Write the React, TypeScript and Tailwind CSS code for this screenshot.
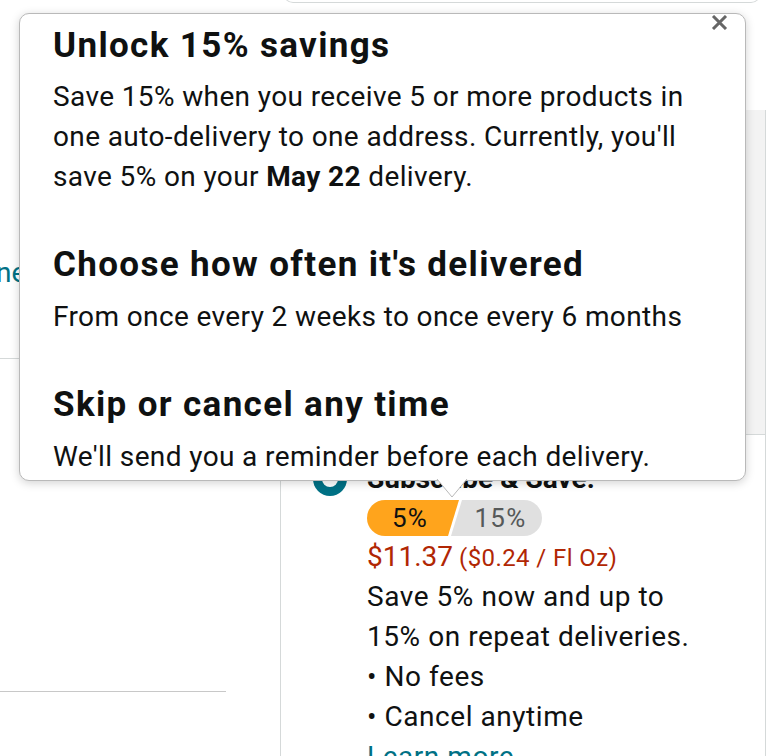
import React from 'react';

function SavingsPopover() {
  return (
    <div className="absolute left-[19px] top-[13px] h-[468px] w-[727px] rounded-[10px] border border-[#b9b9b9] bg-white pl-[33px] pt-[12px] shadow-[0_2px_10px_rgba(0,0,0,0.18)]">
      <button type="button" aria-label="Close" className="absolute right-[17px] top-[1px] text-[#666]">
        <svg width="17" height="15" viewBox="0 0 17 15">
          <path d="M2 1 L15 14 M15 1 L2 14" stroke="currentColor" strokeWidth="3" strokeLinecap="butt" />
        </svg>
      </button>

      <h3 className="text-[35px] font-bold leading-[40px] tracking-[1.35px]">Unlock 15% savings</h3>
      <p className="mt-[11px] text-[28px] leading-[40px] tracking-[0.38px]">
        Save 15% when you receive 5 or more products in
        <br />
        one auto-delivery to one address. Currently, you'll
        <br />
        save 5% on your <b>May 22</b> delivery.
      </p>

      <h3 className="mt-[48px] text-[35px] font-bold leading-[40px] tracking-[1.35px]">
        Choose how often it's delivered
      </h3>
      <p className="mt-[12px] text-[28px] leading-[40px] tracking-[0.38px]">
        From once every 2 weeks to once every 6 months
      </p>

      <h3 className="mt-[48px] text-[35px] font-bold leading-[40px] tracking-[1.35px]">Skip or cancel any time</h3>
      <p className="mt-[12px] text-[28px] leading-[40px] tracking-[0.38px]">
        We'll send you a reminder before each delivery.
      </p>

      {/* arrow pointing at the savings badge */}
      <svg className="absolute left-[416px] top-[465px]" width="32" height="19" viewBox="0 0 32 19">
        <path d="M1 0 L16 18 L31 0 Z" fill="white" />
        <path d="M1 0 L16 18 L31 0" fill="none" stroke="#b9b9b9" strokeWidth="1" />
      </svg>
    </div>
  );
}

function SavingsBadge() {
  return (
    <div className="mt-[1px] flex h-[36px] w-[175px] overflow-hidden rounded-full text-[26px] leading-[36px] tracking-[1.2px]">
      <div className="w-[92px] bg-[#FFA41C] pr-[6px] text-center text-[#0F1111] [clip-path:polygon(0_0,100%_0,calc(100%-11px)_100%,0_100%)]">
        5%
      </div>
      <div className="-ml-[8px] w-[91px] bg-[#e0e0e0] pl-[8px] text-center text-[#565959] [clip-path:polygon(11px_0,100%_0,100%_100%,0_100%)]">
        15%
      </div>
    </div>
  );
}

export default function App() {
  return (
    <div className="relative h-[756px] w-[770px] overflow-hidden bg-white font-['Roboto','Liberation_Sans',sans-serif] text-[#0F1111]">
      {/* bottom edge of the box above */}
      <div className="-mt-[12px] ml-[283px] h-[15px] w-[478px] rounded-b-[10px] border border-t-0 border-[#d5d9d9]" />

      <div className="flex">
        <div className="w-[280px]">
          <div className="-ml-[4px] mt-[250px] text-[28px] leading-[40px] text-[#007185]">ne</div>
          <div className="mt-[65px] border-t border-[#d5d9d9]" />
          <div className="mt-[332px] w-[226px] border-t border-[#c8c8c8]" />
        </div>

        <div className="mt-[107px] w-[486px] border-x border-[#d5d9d9]">
          <div className="h-[325px] border-b border-[#d5d9d9] bg-[#f3f3f3]" />
          <div className="flex pl-[32px] pt-[24px]">
            <div className="mt-[3px] flex h-[34px] w-[34px] items-center justify-center rounded-full bg-[#007185]">
              <div className="h-[16px] w-[16px] rounded-full bg-white" />
            </div>
            <div className="ml-[20px]">
              <div className="text-[28px] font-bold leading-[40px]">Subscribe &amp; Save:</div>
              <SavingsBadge />
              <div className="mt-[1px] flex h-[40px] items-baseline pt-[2px] text-[#B12704]">
                <span className="text-[28px] leading-[36px]">$11.37</span>
                <span className="ml-[6px] text-[24px] leading-[36px] tracking-[0.4px]">($0.24 / Fl Oz)</span>
              </div>
              <div className="text-[28px] leading-[40px] tracking-[0.55px]">
                <p>Save 5% now and up to</p>
                <p>15% on repeat deliveries.</p>
                <p>• No fees</p>
                <p>• Cancel anytime</p>
                <a className="text-[#007185]">Learn more</a>
              </div>
            </div>
          </div>
        </div>
      </div>

      <SavingsPopover />
    </div>
  );
}
